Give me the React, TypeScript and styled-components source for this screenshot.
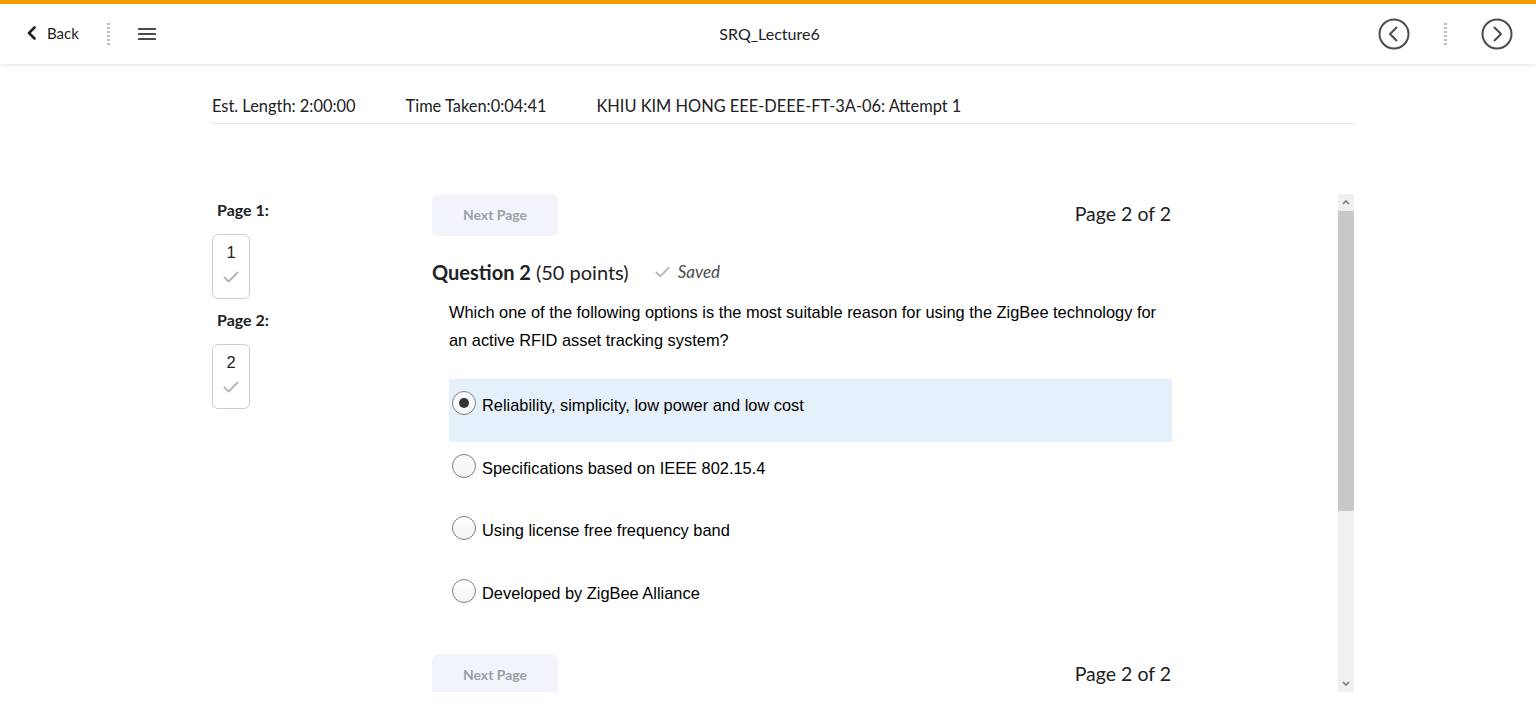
import React from "react";
import styled, { createGlobalStyle } from "styled-components";

const Global = createGlobalStyle`
  html, body { margin: 0; padding: 0; background: #fff; }
  body { font-family: Lato, "Noto Sans", sans-serif; color: #202122; overflow: hidden; }
  * { box-sizing: border-box; }
`;

const TopBar = styled.header`
  height: 64px;
  border-top: 4px solid #f49b00;
  background: #fff;
  box-shadow: 0 1px 4px rgba(0, 0, 0, 0.12);
  display: grid;
  grid-template-columns: 1fr auto 1fr;
  align-items: center;
  padding: 0 23px 1px 26px;
  position: relative;
  z-index: 2;
`;

const BarSide = styled.div<{ $end?: boolean }>`
  display: flex;
  align-items: center;
  justify-content: ${(p) => (p.$end ? "flex-end" : "flex-start")};
  height: 100%;
`;

const BackLink = styled.a`
  display: flex;
  align-items: center;
  gap: 9px;
  font-size: 15px;
  color: #202122;
  text-decoration: none;
  margin-top: -1px;
`;

const DotSep = styled.span<{ $ml: number; $mr: number }>`
  display: block;
  width: 3px;
  height: 23px;
  margin: 0 ${(p) => p.$mr}px 0 ${(p) => p.$ml}px;
  background-image: radial-gradient(circle, #b9c1c6 1.2px, transparent 1.4px);
  background-size: 3px 4px;
  background-repeat: repeat-y;
`;

const IconBtn = styled.button`
  border: 0;
  background: none;
  padding: 0;
  display: flex;
  align-items: center;
  justify-content: center;
  color: #494c4e;
  cursor: pointer;
`;

const Title = styled.div`
  font-size: 16px;
  color: #202122;
  margin-top: -1px;
`;

const Page = styled.main`
  margin-left: 212px;
  width: 1142px;
`;

const InfoRow = styled.div`
  display: flex;
  gap: 50px;
  font-size: 16.4px;
  line-height: 20px;
  color: #202122;
  padding: 32px 0 7px;
  border-bottom: 1px solid #e3e6e8;
`;

const Frame = styled.div`
  margin-top: 70px;
  height: 498px;
  display: flex;
`;

const FrameBody = styled.div`
  flex: 1;
  overflow: hidden;
  display: flex;
`;

const SideNav = styled.nav`
  width: 220px;
  padding-top: 4px;
  display: flex;
  flex-direction: column;
  align-items: flex-start;
`;

const NavLabel = styled.div`
  font-weight: 700;
  font-size: 16px;
  line-height: 24px;
  margin-left: 5px;
  margin-bottom: 12px;
`;

const PageBox = styled.div`
  width: 38px;
  height: 65px;
  border: 1px solid #c9cfd3;
  border-radius: 6px;
  display: flex;
  flex-direction: column;
  align-items: center;
  padding-top: 8px;
  gap: 10px;
  margin-bottom: 9px;
  font-family: "Liberation Sans", Arial, sans-serif;
  font-size: 16.5px;
  line-height: 18px;
  color: #202122;
`;

const Content = styled.section`
  width: 740px;
  display: flex;
  flex-direction: column;
`;

const PagerRow = styled.div`
  display: flex;
  justify-content: space-between;
  align-items: center;
`;

const NextBtn = styled.button`
  width: 126px;
  height: 42px;
  border: 0;
  border-radius: 6px;
  background: #f1f5fb;
  color: #9aa1a6;
  font-family: Lato, sans-serif;
  font-weight: 700;
  font-size: 14px;
  padding-bottom: 2px;
`;

const PageOf = styled.div`
  font-size: 19.5px;
  color: #202122;
  padding-right: 1px;
  margin-top: -4px;
`;

const QHead = styled.div`
  display: flex;
  align-items: center;
  margin-top: 24px;
  font-size: 20px;
  line-height: 24px;
`;

const QNum = styled.span`
  font-weight: 700;
  margin-right: 5px;
`;

const Saved = styled.span`
  display: flex;
  align-items: center;
  gap: 8px;
  margin-left: 26px;
  font-style: italic;
  font-size: 17px;
  color: #494c4e;
`;

const QBody = styled.div`
  margin-left: 17px;
  width: 723px;
  font-family: "Liberation Sans", Arial, sans-serif;
  color: #000;
`;

const QText = styled.p`
  margin: 14px 0 25px;
  font-size: 16.4px;
  line-height: 28px;
`;

const Option = styled.label<{ $on?: boolean }>`
  display: flex;
  align-items: flex-start;
  height: 62.5px;
  padding: 12px 0 0 3px;
  background: ${(p) => (p.$on ? "#e6f0fb" : "transparent")};
  font-size: 16.4px;
`;

const Radio = styled.span<{ $on?: boolean }>`
  width: 24px;
  height: 24px;
  border-radius: 50%;
  border: 1px solid #7b8085;
  background: linear-gradient(#ffffff, #f3f3f3);
  display: flex;
  align-items: center;
  justify-content: center;
  margin-right: 6px;
  flex-shrink: 0;
  &::after {
    content: "";
    width: 10px;
    height: 10px;
    border-radius: 50%;
    background: ${(p) => (p.$on ? "#333" : "transparent")};
  }
`;

const OptText = styled.span`
  line-height: 20px;
  padding-top: 4px;
`;

const Bottom = styled(PagerRow)`
  margin-top: 25px;
`;

const ScrollBar = styled.div`
  width: 16px;
  background: #f0f0f0;
  display: flex;
  flex-direction: column;
  align-items: center;
`;

const ScrollArrow = styled.div`
  height: 17px;
  display: flex;
  align-items: center;
  justify-content: center;
`;

const Thumb = styled.div`
  width: 100%;
  height: 300px;
  background: #c8c8c8;
`;

const Track = styled.div`
  flex: 1;
`;

const Check = ({ w = 16, h = 12 }: { w?: number; h?: number }) => (
  <svg width={w} height={h} viewBox="0 0 16 12" fill="none">
    <path d="M1.5 6.5l4.2 4 8.8-9" stroke="#b1b9be" strokeWidth="2" strokeLinecap="round" strokeLinejoin="round" />
  </svg>
);

const CircleChevron = ({ dir }: { dir: "left" | "right" }) => (
  <svg width="32" height="32" viewBox="0 0 32 32" fill="none">
    <circle cx="16" cy="16" r="14.5" stroke="#494c4e" strokeWidth="2" />
    <path
      d={dir === "left" ? "M18.5 9.5 12 16l6.5 6.5" : "M13.5 9.5 20 16l-6.5 6.5"}
      stroke="#494c4e"
      strokeWidth="2"
      strokeLinecap="round"
      strokeLinejoin="round"
    />
  </svg>
);

const options = [
  "Reliability, simplicity, low power and low cost",
  "Specifications based on IEEE 802.15.4",
  "Using license free frequency band",
  "Developed by ZigBee Alliance",
];

export default function App() {
  return (
    <>
      <Global />
      <TopBar>
        <BarSide>
          <BackLink href="#">
            <svg width="12" height="14" viewBox="0 0 12 14" fill="none">
              <path d="M8.5 1.5 3 7l5.5 5.5" stroke="#202122" strokeWidth="2.6" strokeLinecap="round" strokeLinejoin="round" />
            </svg>
            Back
          </BackLink>
          <DotSep $ml={28} $mr={27} />
          <IconBtn aria-label="menu">
            <svg width="20" height="14" viewBox="0 0 20 14">
              <rect x="1" y="1" width="18" height="2" rx="0.6" fill="#494c4e" />
              <rect x="1" y="6" width="18" height="2" rx="0.6" fill="#494c4e" />
              <rect x="1" y="11" width="18" height="2" rx="0.6" fill="#494c4e" />
            </svg>
          </IconBtn>
        </BarSide>
        <Title>SRQ_Lecture6</Title>
        <BarSide $end>
          <IconBtn aria-label="previous">
            <CircleChevron dir="left" />
          </IconBtn>
          <DotSep $ml={34} $mr={34} />
          <IconBtn aria-label="next">
            <CircleChevron dir="right" />
          </IconBtn>
        </BarSide>
      </TopBar>

      <Page>
        <InfoRow>
          <span>Est. Length: 2:00:00</span>
          <span>Time Taken:0:04:41</span>
          <span>KHIU KIM HONG EEE-DEEE-FT-3A-06: Attempt 1</span>
        </InfoRow>

        <Frame>
          <FrameBody>
            <SideNav>
              <NavLabel>Page 1:</NavLabel>
              <PageBox>
                1
                <Check />
              </PageBox>
              <NavLabel>Page 2:</NavLabel>
              <PageBox>
                2
                <Check />
              </PageBox>
            </SideNav>

            <Content>
              <PagerRow>
                <NextBtn>Next Page</NextBtn>
                <PageOf>Page 2 of 2</PageOf>
              </PagerRow>

              <QHead>
                <QNum>Question 2</QNum>
                <span>(50 points)</span>
                <Saved>
                  <Check w={15} h={12} />
                  Saved
                </Saved>
              </QHead>

              <QBody>
                <QText>
                  Which one of the following options is the most suitable reason for using the ZigBee technology for an
                  active RFID asset tracking system?
                </QText>
                {options.map((o, i) => (
                  <Option key={o} $on={i === 0}>
                    <Radio $on={i === 0} />
                    <OptText>{o}</OptText>
                  </Option>
                ))}
              </QBody>

              <Bottom>
                <NextBtn>Next Page</NextBtn>
                <PageOf>Page 2 of 2</PageOf>
              </Bottom>
            </Content>
          </FrameBody>

          <ScrollBar>
            <ScrollArrow>
              <svg width="8" height="5" viewBox="0 0 8 5">
                <path d="M1 4 4 1l3 3" stroke="#7a7a7a" strokeWidth="1.6" fill="none" />
              </svg>
            </ScrollArrow>
            <Thumb />
            <Track />
            <ScrollArrow>
              <svg width="8" height="5" viewBox="0 0 8 5">
                <path d="M1 1l3 3 3-3" stroke="#7a7a7a" strokeWidth="1.6" fill="none" />
              </svg>
            </ScrollArrow>
          </ScrollBar>
        </Frame>
      </Page>
    </>
  );
}
